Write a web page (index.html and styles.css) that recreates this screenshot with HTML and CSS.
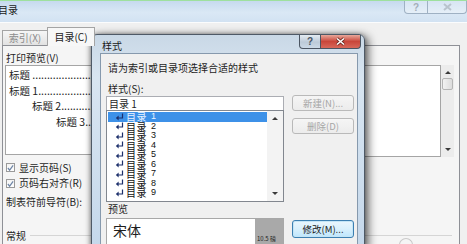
FILE: index.html
```html
<!DOCTYPE html>
<html lang="zh-CN">
<head>
  <meta charset="UTF-8">
  <title>目录</title>
  <link rel="stylesheet" href="styles.css">
</head>
<body>
  <svg width="0" height="0" class="defs">
    <symbol id="ret" viewBox="0 0 9 8"><path d="M7.5 0.5 V5 H2.5" fill="none" stroke="#1c2f6b" stroke-width="1.2"/><path d="M0.8 5 L3.6 2.6 V7.4 Z" fill="#1c2f6b"/></symbol>
  </svg>

  <div class="main-win">
    <div class="caption">
      <span class="caption-title">目录</span>
      <div class="caption-btns">
        <span class="cbtn cbtn-help">?</span>
        <span class="cbtn cbtn-close">
          <svg width="9" height="8" viewBox="0 0 9 8"><path d="M1 1 L8 7 M8 1 L1 7" stroke="#b9c3cd" stroke-width="2"/></svg>
        </span>
      </div>
    </div>

    <div class="main-client">
      <div class="tabs">
        <span class="tab">索引(X)</span>
        <span class="tab tab-active">目录(C)</span>
      </div>

      <div class="tab-panel">
        <div class="panel-cols">
          <div class="col-print">
            <div class="label">打印预览(V)</div>
            <div class="print-preview">
              <div class="toc toc-0">标题 ..........................................</div>
              <div class="toc toc-1">标题 1......................................</div>
              <div class="toc toc-2">标题 2..................................</div>
              <div class="toc toc-3">标题 3..............................</div>
            </div>
            <div class="check">
              <span class="check-box"><svg width="8" height="8" viewBox="0 0 8 8"><path d="M1 4 L3 6.5 L7 1" fill="none" stroke="#6f86a6" stroke-width="1.4"/></svg></span>
              显示页码(S)
            </div>
            <div class="check">
              <span class="check-box"><svg width="8" height="8" viewBox="0 0 8 8"><path d="M1 4 L3 6.5 L7 1" fill="none" stroke="#6f86a6" stroke-width="1.4"/></svg></span>
              页码右对齐(R)
            </div>
            <div class="label leader">制表符前导符(B):</div>
          </div>

          <div class="col-web">
            <div class="label">Web 预览(W)</div>
            <div class="web-preview">
              <div class="web-body"></div>
              <div class="vscroll">
                <span class="arrow arrow-up"></span>
                <span class="thumb"></span>
                <span class="arrow arrow-down"></span>
              </div>
            </div>
          </div>
        </div>

        <div class="group-head"><span>常规</span></div>
        <div class="web-knob"></div>
      </div>
    </div>
  </div>

  <!-- 样式 dialog, floating over the 目录 window -->
  <div class="dialog">
    <div class="dlg-caption">
      <span class="dlg-title">样式</span>
      <div class="dlg-btns">
        <span class="dbtn dbtn-help">?</span>
        <span class="dbtn dbtn-close">
          <svg width="11" height="9" viewBox="0 0 11 9"><path d="M2 1.5 L9 7.5 M9 1.5 L2 7.5" stroke="#6b2a22" stroke-width="3"/><path d="M2 1.5 L9 7.5 M9 1.5 L2 7.5" stroke="#fff" stroke-width="1.6"/></svg>
        </span>
      </div>
    </div>

    <div class="dlg-client">
      <div class="dlg-text">请为索引或目录项选择合适的样式</div>
      <div class="dlg-text dlg-label">样式(S):</div>

      <div class="dlg-row">
        <div class="dlg-left">
          <div class="style-input">目录 1</div>
          <div class="style-list">
            <div class="items">
              <div class="item item-sel"><svg class="ret"><use href="#ret"/></svg><span class="name">目录</span><span class="num">1</span></div>
              <div class="item"><svg class="ret"><use href="#ret"/></svg><span class="name">目录</span><span class="num">2</span></div>
              <div class="item"><svg class="ret"><use href="#ret"/></svg><span class="name">目录</span><span class="num">3</span></div>
              <div class="item"><svg class="ret"><use href="#ret"/></svg><span class="name">目录</span><span class="num">4</span></div>
              <div class="item"><svg class="ret"><use href="#ret"/></svg><span class="name">目录</span><span class="num">5</span></div>
              <div class="item"><svg class="ret"><use href="#ret"/></svg><span class="name">目录</span><span class="num">6</span></div>
              <div class="item"><svg class="ret"><use href="#ret"/></svg><span class="name">目录</span><span class="num">7</span></div>
              <div class="item"><svg class="ret"><use href="#ret"/></svg><span class="name">目录</span><span class="num">8</span></div>
              <div class="item"><svg class="ret"><use href="#ret"/></svg><span class="name">目录</span><span class="num">9</span></div>
            </div>
            <div class="list-scroll">
              <span class="arrow arrow-up"></span>
              <span class="arrow arrow-down"></span>
            </div>
          </div>
        </div>
        <div class="dlg-right">
          <span class="btn btn-disabled btn-new">新建(N)...</span>
          <span class="btn btn-disabled btn-del">删除(D)</span>
        </div>
      </div>

      <div class="dlg-row">
        <div class="dlg-left">
          <div class="dlg-text dlg-preview-label">预览</div>
          <div class="font-preview">
            <div class="font-sample">宋体</div>
            <div class="font-size"><span>10.5 磅</span></div>
          </div>
        </div>
        <div class="dlg-right">
          <span class="btn btn-focus">修改(M)...</span>
        </div>
      </div>
    </div>
  </div>
</body>
</html>
```

FILE: styles.css
```css
* {
  box-sizing: border-box;
}
html, body {
  margin: 0;
}
body {
  position: relative;
  width: 467px;
  height: 244px;
  overflow: hidden;
  background: #f0f0f0;
  font-family: "Noto Sans CJK SC", "Liberation Sans", sans-serif;
  font-size: 10px;
  color: #1e1e1e;
}
.defs {
  position: absolute;
}

/* ---- background 目录 window ---- */
.main-win {
  height: 244px;
  border-top: 1px solid #9ee09e;
}
.caption {
  height: 21px;
  display: flex;
  justify-content: space-between;
  align-items: flex-start;
  background: linear-gradient(#c6daee, #dae8f5 55%, #d2e2f2);
}
.caption-title {
  margin: 3px 0 0 -2px;
  line-height: 12px;
  color: #1a1a1a;
}
.caption-btns {
  display: flex;
}
.cbtn {
  height: 13px;
  display: flex;
  align-items: center;
  justify-content: center;
  border: 1px solid #9fb1c3;
  border-top: 0;
  background: rgba(255, 255, 255, 0.3);
  color: #a3aeb9;
  font-family: "Liberation Sans", sans-serif;
  font-size: 10px;
  font-weight: bold;
}
.cbtn-help {
  width: 24px;
  border-radius: 0 0 0 4px;
}
.cbtn-close {
  width: 39px;
  border-left: 0;
  border-radius: 0 0 4px 0;
}

.main-client {
  height: 222px;
  border-top: 1px solid #fbfcfd;
  padding: 4px 7px 0 2px;
}
.tabs {
  display: flex;
  align-items: flex-end;
  height: 18px;
}
.tab {
  width: 46px;
  height: 15px;
  border: 1px solid #a4a4a4;
  border-bottom: 0;
  background: linear-gradient(#f6f6f6, #e2e2e2);
  color: #8d8d8d;
  line-height: 14px;
  text-align: center;
}
.tab-active {
  position: relative;
  z-index: 1;
  width: 48px;
  height: 19px;
  margin: 0 0 -1px -1px;
  background: #f7f7f7;
  color: #1a1a1a;
  line-height: 17px;
}
.tab-panel {
  position: relative;
  height: 200px;
  border: 1px solid #8e9096;
  border-bottom: 0;
  background: #f5f5f5;
  padding: 6px 5px 0 3px;
}
.panel-cols {
  display: grid;
  grid-template-columns: 1fr 214px;
  column-gap: 20px;
}
.label {
  height: 13px;
  line-height: 12px;
}
.print-preview {
  height: 90px;
  margin-left: -1px;
  border: 1px solid #a5a5a5;
  background: #fff;
  padding-top: 1px;
  overflow: hidden;
}
.toc {
  font-size: 10.5px;
  line-height: 15.5px;
  white-space: nowrap;
  color: #222;
}
.toc-0, .toc-1 {
  padding-left: 3px;
}
.toc-2 {
  padding-left: 26px;
}
.toc-3 {
  padding-left: 50px;
}
.check {
  display: flex;
  align-items: center;
  height: 15px;
  margin-top: 5px;
  line-height: 14px;
}
.check + .check {
  margin-top: 0.5px;
}
.check-box {
  width: 9px;
  height: 9px;
  margin-right: 4px;
  border: 1px solid #9a9a9a;
  background: linear-gradient(#f4f4f4, #fff);
  display: flex;
}
.leader {
  margin-top: 5px;
}
.web-preview {
  display: flex;
  height: 92px;
}
.web-body {
  flex: 1;
  border: 1px solid #a5a5a5;
  background: #fff;
}
.vscroll {
  width: 13px;
  display: flex;
  flex-direction: column;
  align-items: center;
  background: #ececec;
  padding-top: 6px;
}
.thumb {
  width: 11px;
  height: 12px;
  margin-top: 4px;
  border: 1px solid #b5b5b5;
  border-radius: 2px;
  background: linear-gradient(90deg, #f2f2f2, #dcdcdc);
}
.vscroll .arrow-down {
  margin-top: auto;
  margin-bottom: 6px;
}
.arrow {
  width: 0;
  height: 0;
  border-left: 3px solid transparent;
  border-right: 3px solid transparent;
}
.arrow-up {
  border-bottom: 3px solid #3a3a3a;
}
.arrow-down {
  border-top: 3px solid #3a3a3a;
}
.group-head {
  display: flex;
  align-items: center;
  gap: 4px;
  margin-top: 20px;
  margin-right: 2px;
  line-height: 14px;
}
.group-head::after {
  content: "";
  flex: 1;
  height: 1px;
  background: #d5d5d5;
}
.web-knob {
  position: absolute;
  left: 396px;
  top: 192px;
  width: 14px;
  height: 14px;
  border: 1px solid #c9c9c9;
  border-radius: 7px 7px 0 0;
  border-bottom: 0;
}

/* ---- 样式 dialog ---- */
.dialog {
  position: absolute;
  left: 91px;
  top: 34px;
  width: 274px;
  height: 215px;
  padding: 0 6px 0 8px;
  border: 1px solid #4e5966;
  border-radius: 6px 6px 0 0;
  background: linear-gradient(#c9d8e6, #d8e5f1 20%, #c5d8eb);
  box-shadow: 3px 2px 10px rgba(0, 0, 0, 0.65), -1px 0 4px rgba(0, 0, 0, 0.3);
}
.dlg-caption {
  height: 18px;
  display: flex;
  justify-content: space-between;
  align-items: flex-start;
}
.dlg-title {
  margin: 5px 0 0 2px;
  line-height: 12px;
  color: #1a1a1a;
}
.dlg-btns {
  display: flex;
  margin-right: -3px;
}
.dbtn {
  height: 14px;
  display: flex;
  align-items: center;
  justify-content: center;
  border: 1px solid #4b5562;
  border-top: 0;
}
.dbtn-help {
  width: 22px;
  border-radius: 0 0 0 4px;
  background: linear-gradient(#e4ebf2, #bccad8 55%, #ccd9e6);
  color: #4a5563;
  font-family: "Liberation Sans", sans-serif;
  font-size: 10px;
  font-weight: bold;
}
.dbtn-close {
  width: 40px;
  border-left: 0;
  border-radius: 0 0 4px 0;
  background: linear-gradient(#e8a89b, #c9463a 50%, #d7685a);
}
.dlg-client {
  height: 200px;
  border: 1px solid #8699ad;
  background: #f0f0f0;
  padding: 8px 0 0 5px;
}
.dlg-text {
  line-height: 12px;
  padding-left: 2px;
}
.dlg-label {
  margin-top: 9px;
}
.dlg-row {
  display: flex;
  gap: 8px;
}
.dlg-left {
  width: 178px;
}
.dlg-right {
  width: 62px;
  display: flex;
  flex-direction: column;
}
.style-input {
  height: 15px;
  margin-top: 1px;
  border: 1px solid #abadb3;
  background: #fff;
  padding-left: 2px;
  line-height: 13px;
}
.style-list {
  display: flex;
  height: 92px;
  margin-top: -1px;
  border: 1px solid #82878f;
  background: #fff;
}
.items {
  flex: 1;
  padding: 1px 0 0 1px;
  overflow: hidden;
}
.item {
  display: flex;
  align-items: center;
  height: 9.5px;
  line-height: 9.5px;
  color: #111;
}
.item-sel {
  background: #3d91e8;
  color: #e8f2ff;
}
.ret {
  width: 9px;
  height: 8px;
  margin: 0 2px 0 7px;
  flex: none;
}
.name {
  font-size: 10px;
  letter-spacing: 0.5px;
}
.num {
  margin-left: 4px;
  font-family: "Liberation Sans", sans-serif;
  font-size: 9px;
}
.list-scroll {
  width: 16px;
  display: flex;
  flex-direction: column;
  align-items: center;
  justify-content: space-between;
  padding: 6px 0 6px;
  background: #f3f3f3;
}
.btn {
  height: 16px;
  display: flex;
  align-items: center;
  justify-content: center;
  border: 1px solid #b9b9b9;
  border-radius: 3px;
  background: linear-gradient(#f5f5f5, #ececec);
  font-size: 9.5px;
}
.btn-disabled {
  color: #a6a6a6;
}
.btn-del {
  margin-top: 7px;
}
.btn-focus {
  height: 18px;
  margin-top: 18px;
  border: 1px solid #3c7fb1;
  background: linear-gradient(#eaf6fd, #d9f0fc 50%, #bee6fd);
  box-shadow: inset 0 0 0 1px #c4e5f6;
  color: #1a1a1a;
}
.dlg-preview-label {
  height: 16px;
  line-height: 14px;
}
.font-preview {
  display: flex;
  height: 40px;
  border: 1px solid #a8a8a8;
  background: #fff;
}
.font-sample {
  flex: 1;
  padding: 2px 0 0 6px;
  font-size: 14px;
  line-height: 18px;
}
.font-size {
  width: 28px;
  background: #a9a9a9;
  display: flex;
  padding: 16px 0 0 2px;
}
.font-size span {
  font-size: 6px;
  line-height: 8px;
  color: #222;
  white-space: nowrap;
}
```
